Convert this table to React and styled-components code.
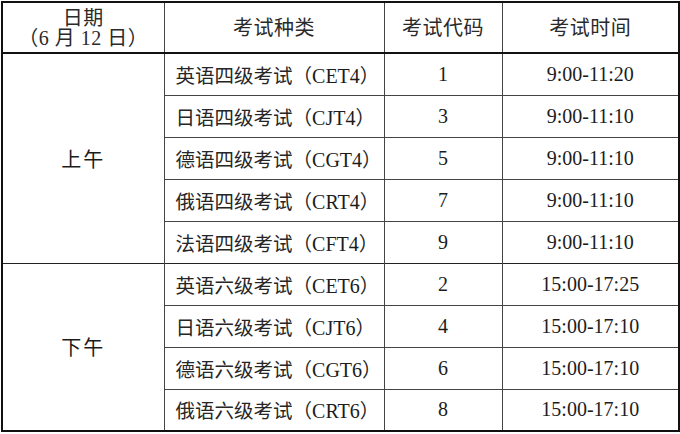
import styled, { createGlobalStyle } from "styled-components";

const GlobalStyle = createGlobalStyle`
  html, body {
    margin: 0;
    padding: 0;
    background: #ffffff;
  }
  body {
    padding: 1px 0 0 1px;
    font-family: "Liberation Serif", "Noto Sans CJK SC", serif;
    color: #1c1c1c;
  }
`;

const StyledTable = styled.table`
  width: 677px;
  border-collapse: collapse;
  table-layout: fixed;
  border: 2px solid #111;
  font-size: 20px;
`;

const HeadRow = styled.tr`
  height: 51px;
  border-bottom: 2px solid #111;
`;

const Row = styled.tr`
  height: 42px;
  border-bottom: ${(props) => (props.$groupEnd ? "1.5px solid #222" : "1px solid #444")};
`;

const HeadCell = styled.th`
  font-weight: normal;
  text-align: center;
  vertical-align: middle;
  line-height: 20px;
  letter-spacing: 0.5px;
  padding: 0;
  border-left: 1px solid #444;
  color: #2a2a2a;
`;

const Cell = styled.td`
  padding: 0;
  padding-left: ${(props) => (props.$align === "left" ? "11px" : "0")};
  text-align: ${(props) => props.$align || "center"};
  vertical-align: middle;
  border-left: 1px solid #444;
  letter-spacing: ${(props) => props.$spacing || "0"};
  white-space: nowrap;
  color: #1c1c1c;
`;

const Chinese = styled.span`
  font-size: 19.5px;
  color: #262626;
`;

const groups = [
  {
    label: "上午",
    rows: [
      { lang: "英语", level: "四", code: "CET4", num: 1, time: "9:00-11:20" },
      { lang: "日语", level: "四", code: "CJT4", num: 3, time: "9:00-11:10" },
      { lang: "德语", level: "四", code: "CGT4", num: 5, time: "9:00-11:10" },
      { lang: "俄语", level: "四", code: "CRT4", num: 7, time: "9:00-11:10" },
      { lang: "法语", level: "四", code: "CFT4", num: 9, time: "9:00-11:10" },
    ],
  },
  {
    label: "下午",
    rows: [
      { lang: "英语", level: "六", code: "CET6", num: 2, time: "15:00-17:25" },
      { lang: "日语", level: "六", code: "CJT6", num: 4, time: "15:00-17:10" },
      { lang: "德语", level: "六", code: "CGT6", num: 6, time: "15:00-17:10" },
      { lang: "俄语", level: "六", code: "CRT6", num: 8, time: "15:00-17:10" },
    ],
  },
];

export default function App() {
  return (
    <>
      <GlobalStyle />
      <StyledTable>
        <colgroup>
          <col style={{ width: 162 }} />
          <col style={{ width: 220 }} />
          <col style={{ width: 118 }} />
          <col style={{ width: 177 }} />
        </colgroup>
        <thead>
          <HeadRow>
            <HeadCell>
              日期
              <br />
              （6 月 12 日）
            </HeadCell>
            <HeadCell>考试种类</HeadCell>
            <HeadCell>考试代码</HeadCell>
            <HeadCell>考试时间</HeadCell>
          </HeadRow>
        </thead>
        <tbody>
          {groups.map((group) =>
            group.rows.map((row, i) => (
              <Row key={row.code} $groupEnd={i === group.rows.length - 1}>
                {i === 0 && (
                  <Cell rowSpan={group.rows.length} $spacing="2px">
                    {group.label}
                  </Cell>
                )}
                <Cell $align="left">
                  <Chinese>
                    {row.lang}
                    {row.level}级考试（
                  </Chinese>
                  {row.code}
                  <Chinese>）</Chinese>
                </Cell>
                <Cell>{row.num}</Cell>
                <Cell>{row.time}</Cell>
              </Row>
            ))
          )}
        </tbody>
      </StyledTable>
    </>
  );
}
